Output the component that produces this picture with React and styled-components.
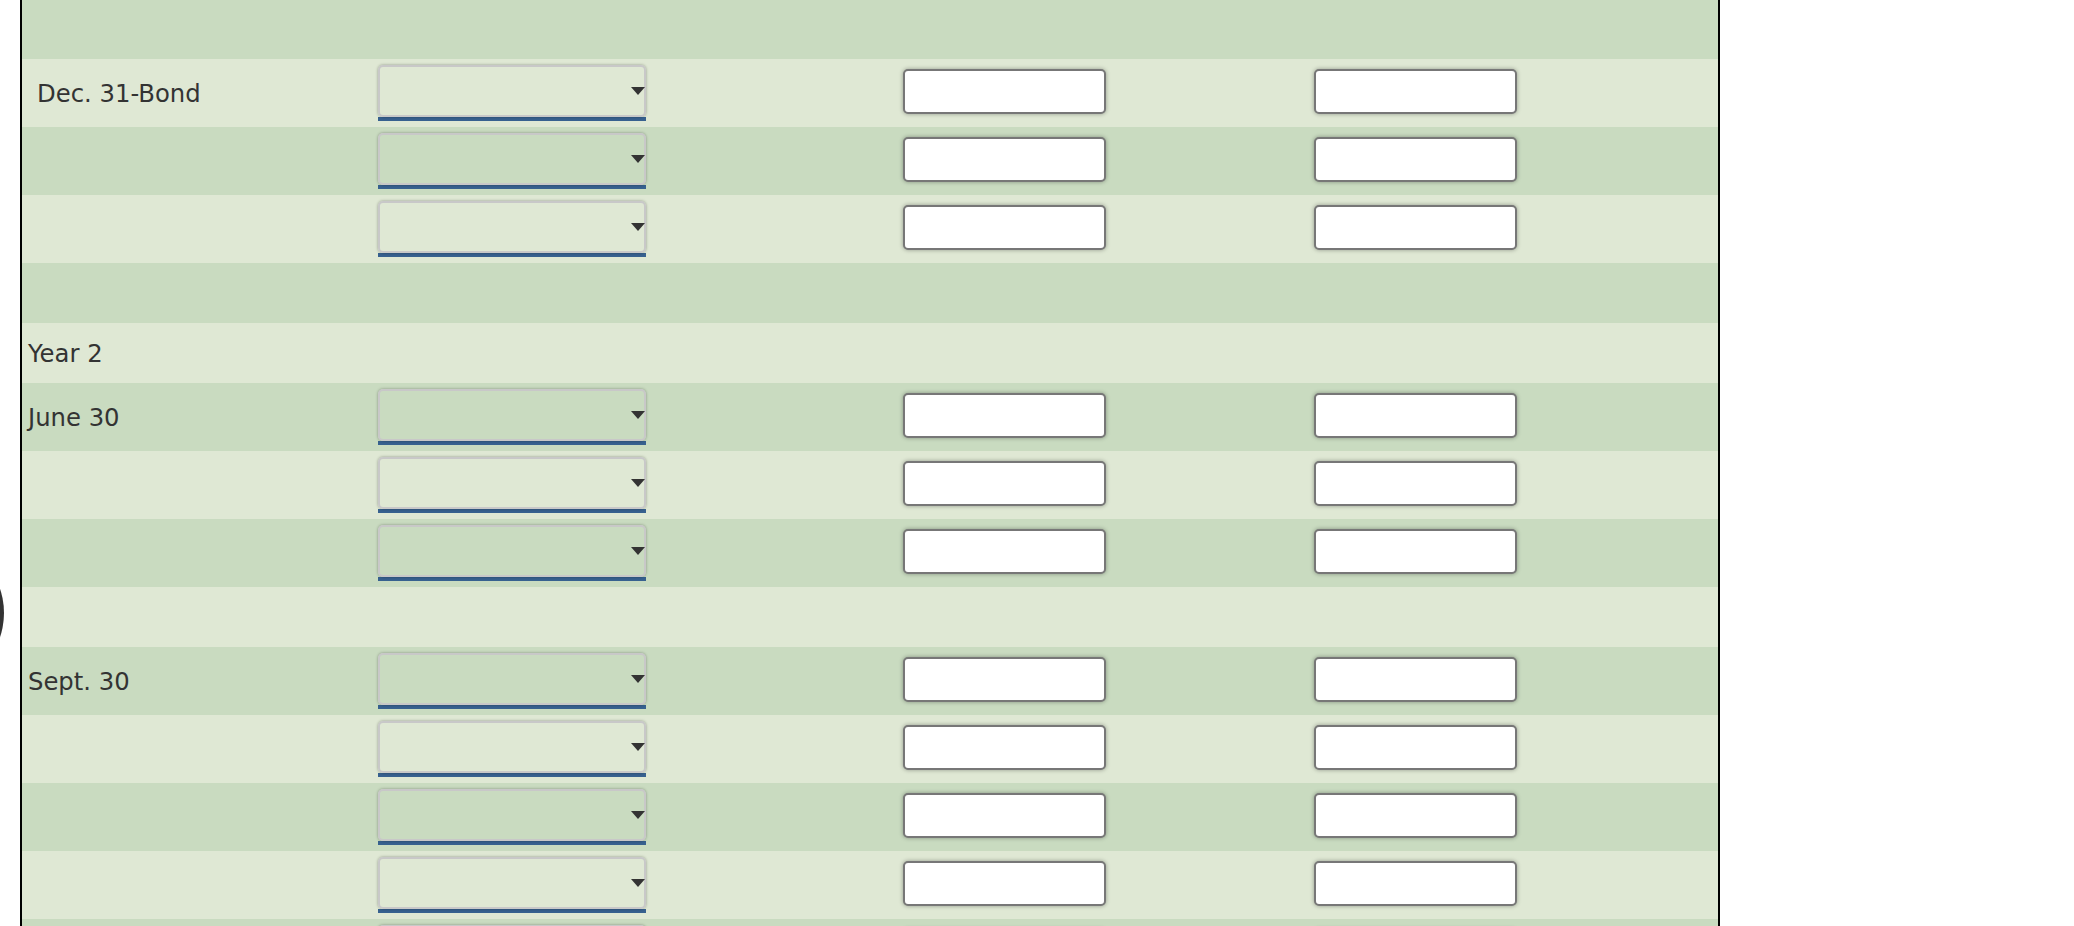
import React from "react";
import styled, { createGlobalStyle } from "styled-components";

const GlobalStyle = createGlobalStyle`
  html, body {
    margin: 0;
    padding: 0;
    background: #ffffff;
    overflow: hidden;
  }
  body {
    font-family: "DejaVu Sans", Verdana, sans-serif;
  }
`;

const Page = styled.div`
  position: relative;
  width: 2074px;
  height: 926px;
  padding-left: 20px;
  box-sizing: border-box;
`;

const Table = styled.div`
  width: 1700px;
  border-left: 2px solid #000;
  border-right: 2px solid #000;
  box-sizing: border-box;
`;

const Row = styled.div`
  display: grid;
  grid-template-columns: 356px 525px 411px 1fr;
  align-items: center;
  height: ${(p) => p.$h}px;
  background: ${(p) => (p.$dark ? "#c9dbc0" : "#dfe8d4")};
`;

const Label = styled.div`
  padding-left: ${(p) => p.$indent}px;
  font-size: 24.3px;
  color: #333;
  white-space: nowrap;
`;

const SelectWrap = styled.div`
  position: relative;
  width: 268px;
  border-bottom: 4px solid #37618f;
`;

const Select = styled.select`
  display: block;
  width: 268px;
  height: 52px;
  margin: 0;
  appearance: none;
  background: transparent;
  border: 2px solid #c8c8c8;
  border-radius: 5px;
  box-shadow: 0 0 3px rgba(0, 0, 0, 0.35);
  outline: none;
`;

const Arrow = styled.span`
  position: absolute;
  right: 1px;
  top: 22px;
  width: 0;
  height: 0;
  border-left: 7px solid transparent;
  border-right: 7px solid transparent;
  border-top: 8px solid #333;
  pointer-events: none;
`;

const Input = styled.input`
  display: block;
  width: 203px;
  height: 45px;
  margin: -3px 0 0;
  box-sizing: border-box;
  border: 2px solid #777;
  border-radius: 5px;
  background: #fff;
  box-shadow: 0 0 4px rgba(0, 0, 0, 0.35);
  outline: none;
`;

const EdgeMark = styled.svg`
  position: absolute;
  left: 0;
  top: 586px;
`;

const rows = [
  { h: 59 },
  { h: 68, entry: true, label: "Dec. 31-Bond", indent: 15 },
  { h: 68, entry: true },
  { h: 68, entry: true },
  { h: 60 },
  { h: 60, label: "Year 2", indent: 6 },
  { h: 68, entry: true, label: "June 30", indent: 6 },
  { h: 68, entry: true },
  { h: 68, entry: true },
  { h: 60 },
  { h: 68, entry: true, label: "Sept. 30", indent: 6 },
  { h: 68, entry: true },
  { h: 68, entry: true },
  { h: 68, entry: true },
  { h: 68, entry: true },
];

const App = () => {
  return (
    <>
      <GlobalStyle />
      <Page>
        <EdgeMark width="8" height="54" viewBox="0 0 8 54">
          <circle cx="-72" cy="27" r="76" fill="#333" />
        </EdgeMark>
        <Table>
          {rows.map((r, i) => (
            <Row key={i} $h={r.h} $dark={i % 2 === 0}>
              <Label $indent={r.indent || 0}>{r.label}</Label>
              {r.entry ? (
                <>
                  <SelectWrap>
                    <Select defaultValue="">
                      <option value=""></option>
                    </Select>
                    <Arrow />
                  </SelectWrap>
                  <Input type="text" />
                  <Input type="text" />
                </>
              ) : null}
            </Row>
          ))}
        </Table>
      </Page>
    </>
  );
};

export default App;
